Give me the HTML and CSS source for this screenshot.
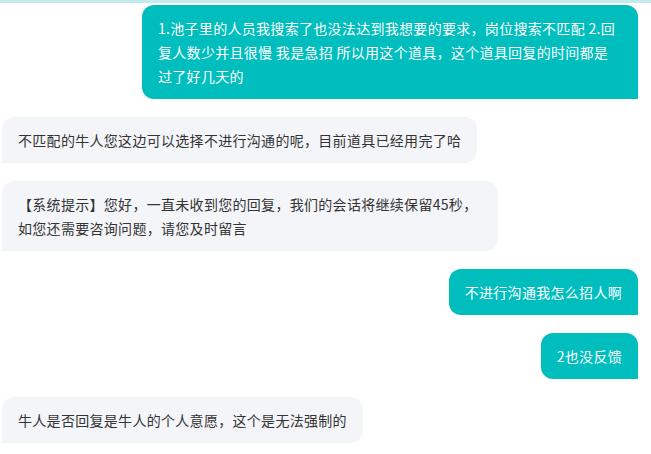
FILE: index.html
```html
<!DOCTYPE html>
<html lang="zh-CN">
<head>
    <meta charset="UTF-8">
    <meta name="viewport" content="width=device-width, initial-scale=1.0">
    <title>聊天记录</title>
    <link rel="stylesheet" href="styles.css">
</head>
<body>
    <div class="top-line"></div>
    <div class="chat">
        <div class="msg mine">1.池子里的人员我搜索了也没法达到我想要的要求，岗位搜索不匹配 2.回复人数少并且很慢 我是急招 所以用这个道具，这个道具回复的时间都是过了好几天的</div>
        <div class="msg other">不匹配的牛人您这边可以选择不进行沟通的呢，目前道具已经用完了哈</div>
        <div class="msg other">【系统提示】您好，一直未收到您的回复，我们的会话将继续保留45秒，如您还需要咨询问题，请您及时留言</div>
        <div class="msg mine">不进行沟通我怎么招人啊</div>
        <div class="msg mine">2也没反馈</div>
        <div class="msg other">牛人是否回复是牛人的个人意愿，这个是无法强制的</div>
    </div>
</body>
</html>
```

FILE: styles.css
```css
body {
    margin: 0;
    background: #fff;
    font-family: "Noto Sans CJK SC", "Microsoft YaHei", sans-serif;
    font-size: 14px;
    color: #333;
}
.top-line {
    height: 3px;
    background-color: #c3ebef;
}
.chat {
    display: flex;
    flex-direction: column;
    gap: 18px;
    padding: 2px 13px 0 2px;
}
.msg {
    max-width: 496px;
    box-sizing: border-box;
    padding: 11px 16px;
    line-height: 24px;
    letter-spacing: 0.3px;
    word-break: break-all;
}
.mine {
    align-self: flex-end;
    background-color: #00bebd;
    color: #fff;
    border-radius: 12px 12px 0 12px;
}
.other {
    align-self: flex-start;
    background-color: #f4f5f9;
    border-radius: 12px 12px 12px 0;
}
```
